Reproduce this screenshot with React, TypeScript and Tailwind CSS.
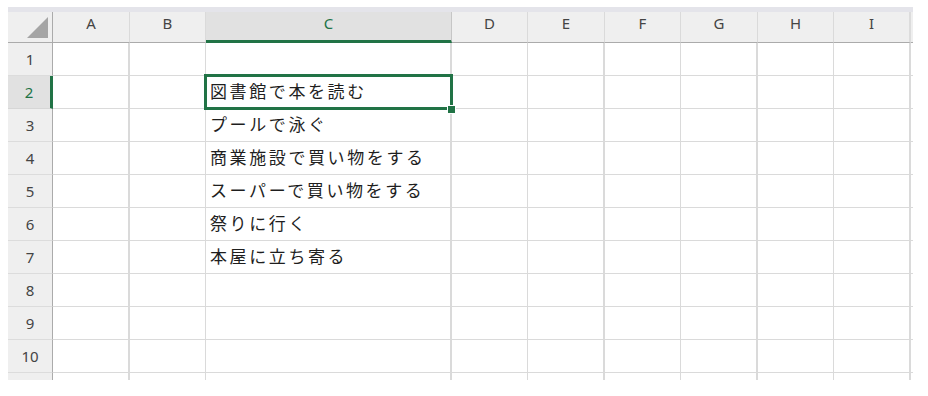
import React from "react";

const cols = [
  { name: "A", w: "w-[77px]" },
  { name: "B", w: "w-[76px]" },
  { name: "C", w: "w-[246px]" },
  { name: "D", w: "w-[76px]" },
  { name: "E", w: "w-[77px]" },
  { name: "F", w: "w-[76px]" },
  { name: "G", w: "w-[77px]" },
  { name: "H", w: "w-[76px]" },
  { name: "I", w: "w-[77px]" },
];

// every other column line renders a touch heavier in the screenshot
const thick = new Set(["A", "C", "E", "G", "I"]);

const values: Record<number, string> = {
  2: "図書館で本を読む",
  3: "プールで泳ぐ",
  4: "商業施設で買い物をする",
  5: "スーパーで買い物をする",
  6: "祭りに行く",
  7: "本屋に立ち寄る",
};

const rows = [1, 2, 3, 4, 5, 6, 7, 8, 9, 10];

export default function App() {
  return (
    <div className="h-[396px] w-[928px] bg-white pt-[7px] pl-[8px] font-['Noto_Sans',sans-serif]">
      <div className="w-[905px]">
        <div className="h-[5px] bg-[#e4e4ea]" />

        {/* column headers */}
        <div className="flex h-[31px] bg-[#efefef]">
          <div className="relative w-[45px] shrink-0 border-r border-b border-[#ababab]">
            <svg className="absolute left-[19px] top-[5px]" width="21" height="21" viewBox="0 0 21 21">
              <polygon points="21,0 21,21 0,21" fill="#a5a5a5" />
            </svg>
          </div>
          {cols.map((c) => (
            <div
              key={c.name}
              className={`${c.w} shrink-0 flex items-center justify-center border-r text-[15px] ${
                c.name === "C"
                  ? "bg-[#e1e1e1] border-[#c6c6c6] border-b-[3px] border-b-[#217346] text-[#217346] pb-[6px]"
                  : "border-[#dadada] border-b border-b-[#ababab] text-[#444] pb-[8px]"
              } ${c.name === "I" ? "border-r-[2px] border-r-[#dcdcdc]" : ""}`}
            >
              {c.name}
            </div>
          ))}
          <div className="w-[3px] border-b border-[#ababab]" />
        </div>

        {/* rows */}
        {rows.map((r) => (
          <div key={r} className="flex h-[33px]">
            <div
              className={`w-[45px] shrink-0 flex items-center justify-center border-b border-r text-[15px] ${
                r === 2
                  ? "bg-[#e1e1e1] border-b-[#d6d6d6] border-r-[3px] border-r-[#217346] text-[#217346]"
                  : "bg-[#efefef] border-b-[#dcdcdc] border-r-[#ababab] text-[#444]"
              }`}
            >
              {r}
            </div>
            {cols.map((c) => (
              <div
                key={c.name}
                className={`${c.w} shrink-0 relative border-r border-b border-[#dadada] ${
                  thick.has(c.name) ? "border-r-[2px]" : ""
                } ${c.name === "C" && r === 2 ? "z-10" : ""}`}
              >
                {c.name === "C" && values[r] && (
                  <div className="flex h-full items-center pl-[4px] pb-[2px] text-[17px] tracking-[2.6px] text-[#1e1e1e] font-['Noto_Sans_CJK_JP',sans-serif] whitespace-nowrap">
                    {values[r]}
                  </div>
                )}
                {c.name === "C" && r === 2 && (
                  <>
                    <div className="absolute left-[-2px] top-[-2px] right-[-3px] bottom-[-2px] border-[3px] border-[#217346]" />
                    <div className="absolute right-[-6px] bottom-[-6px] h-[7px] w-[7px] bg-[#217346] border border-white box-content" />
                  </>
                )}
              </div>
            ))}
            <div className="w-[3px] border-b border-[#dadada]" />
          </div>
        ))}

        {/* partial row */}
        <div className="flex h-[7px]">
          <div className="w-[45px] shrink-0 bg-[#efefef] border-r border-[#ababab]" />
          {cols.map((c) => (
            <div
              key={c.name}
              className={`${c.w} shrink-0 border-r border-[#dadada] ${thick.has(c.name) ? "border-r-[2px]" : ""}`}
            />
          ))}
        </div>
      </div>
    </div>
  );
}
